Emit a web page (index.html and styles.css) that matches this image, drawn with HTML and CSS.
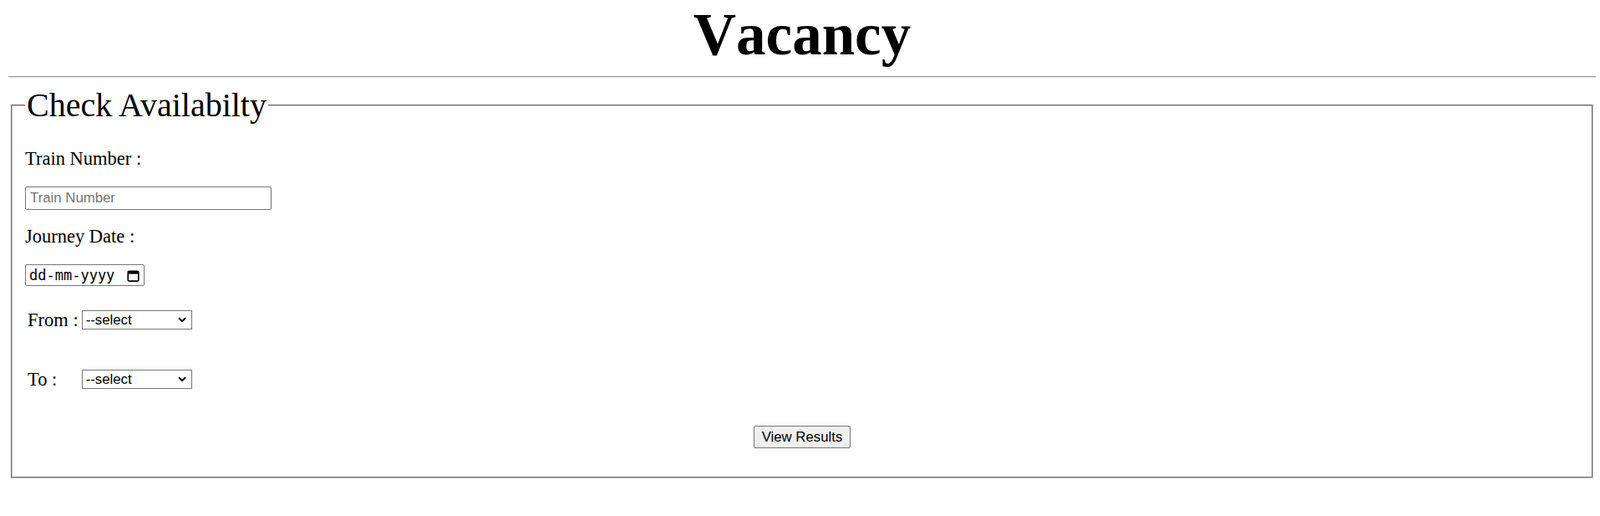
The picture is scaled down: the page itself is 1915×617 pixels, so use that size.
FILE: index.html
```html
<!DOCTYPE html>
<html lang="en">
<head>
<meta charset="utf-8">
<title>Vacancy</title>
<link rel="stylesheet" href="styles.css">
</head>
<body class="page">
<h1 class="title">Vacancy</h1>
<hr class="rule">
<fieldset class="panel">
<legend class="panel-legend">Check Availabilty</legend>
<p class="field-label">Train Number :</p>
<input class="text-input" type="text" placeholder="Train Number">
<p class="field-label field-label-second">Journey Date :</p>
<div class="date-input">
<input class="date-text" type="text" placeholder="dd-mm-yyyy" aria-label="Journey Date">
<svg class="date-icon" width="15" height="15" viewBox="0 0 15 15" aria-hidden="true">
<path d="M2.5 2.2h10a1.3 1.3 0 0 1 1.3 1.3v9.3a1.3 1.3 0 0 1-1.3 1.3h-10a1.3 1.3 0 0 1-1.3-1.3V3.5a1.3 1.3 0 0 1 1.3-1.3z" fill="none" stroke="#000" stroke-width="1.6"/>
<rect x="1.4" y="2.4" width="12.2" height="3.2" fill="#000"/>
</svg>
</div>
<div class="route">
<span class="route-label">From :</span>
<select class="route-select"><option>--select</option></select>
<span class="route-label">To :</span>
<select class="route-select"><option>--select</option></select>
</div>
<div class="actions"><button class="btn" type="button">View Results</button></div>
</fieldset>
</body>
</html>
```
FILE: styles.css
```css
html, body {
  background: #ffffff;
}
.page {
  margin: 0 5px 0 10px;
  font-family: "Liberation Serif", "Times New Roman", serif;
  color: #000;
}
.title {
  margin: 1px 0 0;
  font-family: "Liberation Serif", "Times New Roman", serif;
  font-weight: bold;
  font-size: 71px;
  line-height: 80px;
  font-kerning: none;
  text-align: center;
}
.rule {
  margin: 10px 0;
  height: 0;
  border: 0;
  border-top: 1px solid #9a9a9a;
  border-bottom: 1px solid #e2e2e2;
}
.panel {
  margin: 0 3px;
  padding: 7px 15px 14px;
  border: 2px groove #c0c0c0;
  min-width: 0;
}
.panel-legend {
  padding: 0 2px;
  font-size: 40px;
  line-height: 46px;
}
.field-label {
  margin: 21px 0 21px;
  font-size: 22.5px;
  line-height: 25px;
}
.field-label-second {
  margin-top: 19px;
}
.text-input {
  display: block;
  box-sizing: border-box;
  width: 295px;
  height: 28px;
  margin: 0;
  padding: 2px 5px;
  border: 1px solid #767676;
  border-radius: 2px;
  font-family: "Liberation Sans", Arial, sans-serif;
  font-size: 16.8px;
  color: #000;
}
.text-input::placeholder {
  color: #757575;
}
.date-input {
  display: flex;
  align-items: center;
  box-sizing: border-box;
  width: 143px;
  height: 26px;
  margin: 20px 0 0;
  padding: 0 5px 0 3px;
  border: 1px solid #767676;
  border-radius: 2px;
  background: #fff;
}
.date-text {
  flex: 1;
  min-width: 0;
  margin: 0;
  padding: 0 0 0 1px;
  border: 0;
  outline: none;
  background: transparent;
  font-family: "DejaVu Sans Mono", "Liberation Mono", monospace;
  font-size: 17px;
  letter-spacing: 0;
  color: #000;
}
.date-text::placeholder {
  color: #000;
}
.date-icon {
  flex: none;
  display: block;
}
.route {
  display: grid;
  grid-template-columns: auto auto;
  justify-content: start;
  align-items: center;
  column-gap: 4px;
  row-gap: 46px;
  margin-top: 28px;
  padding-left: 3px;
}
.route-label {
  font-size: 22.5px;
  line-height: 25px;
}
.route-select {
  appearance: none;
  -webkit-appearance: none;
  box-sizing: border-box;
  width: 132px;
  height: 23px;
  margin: 0;
  padding: 0 20px 0 4px;
  border: 1px solid #767676;
  border-radius: 0;
  background: #fff url("data:image/svg+xml,%3Csvg xmlns='http://www.w3.org/2000/svg' width='10' height='7' viewBox='0 0 10 7'%3E%3Cpath d='M1 1.2l4 4 4-4' fill='none' stroke='%23000' stroke-width='2'/%3E%3C/svg%3E") no-repeat right 6px center;
  font-family: "Liberation Sans", Arial, sans-serif;
  font-size: 16.8px;
  color: #000;
}
.actions {
  display: flex;
  justify-content: center;
  margin: 43px 0 20px;
}
.btn {
  box-sizing: border-box;
  height: 27px;
  margin: 0;
  padding: 0 9px;
  border: 1px solid #767676;
  border-radius: 2px;
  background: #efefef;
  font-family: "Liberation Sans", Arial, sans-serif;
  font-size: 16.8px;
  color: #000;
}
```
